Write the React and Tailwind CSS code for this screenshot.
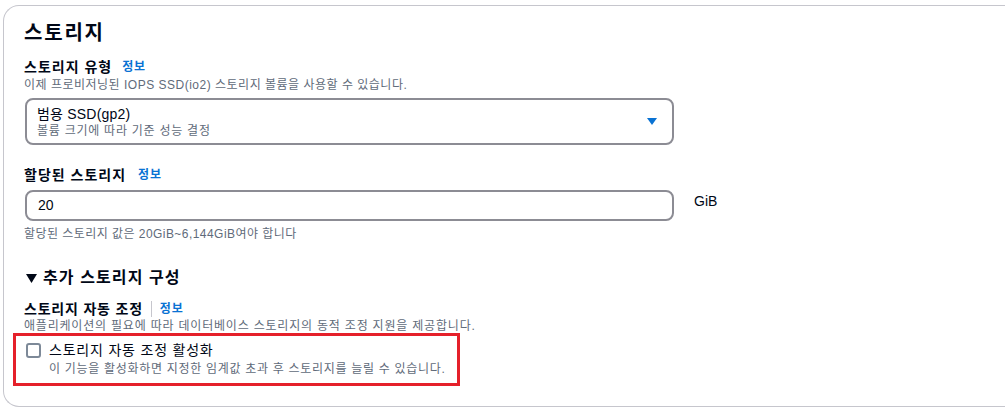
export default function App() {
  const font = { fontFamily: '"Liberation Sans", "Noto Sans CJK KR", sans-serif' };
  return (
    <div className="w-[1005px] h-[408px] bg-white overflow-hidden pt-[5px] pl-[3px]" style={font}>
      <div className="w-[1010px] h-[402px] border border-r-0 border-[#c6c6cd] rounded-l-[16px] bg-white pl-[20px] pt-[15px]">
        <h2 className="text-[20px] leading-[24px] font-bold text-[#000716] tracking-[1.8px]">스토리지</h2>

        <div className="mt-[13px]">
          <div className="flex items-center gap-[10px] h-[18px]">
            <span className="text-[14px] font-bold text-[#000716] tracking-[1px]">스토리지 유형</span>
            <span className="text-[12px] font-bold text-[#0972d3] tracking-[0.8px]">정보</span>
          </div>
          <div className="text-[12px] leading-[16px] text-[#5f6b7a] mt-[1px] tracking-[0.5px]">
            이제 프로비저닝된 IOPS SSD(io2) 스토리지 볼륨을 사용할 수 있습니다.
          </div>
          <div className="mt-[5px] ml-[1px] w-[649px] h-[47px] border-2 border-[#8c8c94] rounded-[8px] flex items-center justify-between pl-[10px] pr-[14px]">
            <div className="flex flex-col">
              <span className="text-[14px] leading-[18px] text-[#000716] tracking-[0.2px]">범용 SSD(gp2)</span>
              <span className="text-[12px] leading-[16px] text-[#5f6b7a] tracking-[0.75px]">볼륨 크기에 따라 기준 성능 결정</span>
            </div>
            <svg width="12" height="10" viewBox="0 0 12 10">
              <polygon points="1,1 11,1 6,8" fill="#0972d3" />
            </svg>
          </div>
        </div>

        <div className="mt-[21px]">
          <div className="flex items-center gap-[12px] h-[18px]">
            <span className="text-[14px] font-bold text-[#000716] tracking-[1px]">할당된 스토리지</span>
            <span className="text-[12px] font-bold text-[#0972d3] tracking-[0.8px]">정보</span>
          </div>
          <div className="flex items-start mt-[6px]">
            <div className="ml-[1px] w-[649px] h-[31px] border-2 border-[#8c8c94] rounded-[8px] flex items-center pl-[11px]">
              <span className="text-[14px] text-[#000716]">20</span>
            </div>
            <span className="ml-[20px] mt-[1px] text-[14px] text-[#000716]">GiB</span>
          </div>
          <div className="text-[12px] leading-[16px] text-[#5f6b7a] mt-[5px] tracking-[0.45px]">
            할당된 스토리지 값은 20GiB~6,144GiB여야 합니다
          </div>
        </div>

        <div className="mt-[25px] flex items-center gap-[6px] h-[22px] pl-[2px]">
          <svg width="11" height="9" viewBox="0 0 11 9">
            <polygon points="0,0 11,0 5.5,9" fill="#000716" />
          </svg>
          <span className="text-[16px] font-bold text-[#000716] tracking-[1.1px]">추가 스토리지 구성</span>
        </div>

        <div className="mt-[11px]">
          <div className="flex items-center h-[18px]">
            <span className="text-[14px] font-bold text-[#000716] tracking-[0.8px]">스토리지 자동 조정</span>
            <span className="mx-[8px] w-px h-[16px] bg-[#c6c6cd]"></span>
            <span className="text-[12px] font-bold text-[#0972d3] tracking-[0.8px]">정보</span>
          </div>
          <div className="text-[12px] leading-[14px] text-[#5f6b7a] mt-[1px] tracking-[0.8px]">
            애플리케이션의 필요에 따라 데이터베이스 스토리지의 동적 조정 지원을 제공합니다.
          </div>
          <div className="ml-[-11px] w-[447px] h-[53px] border-[3px] border-[#e5202a] pl-[10px] pt-[4px]">
            <div className="flex items-start">
              <div className="mt-[3px] w-[15px] h-[15px] border-2 border-[#7d8998] rounded-[3px] shrink-0"></div>
              <div className="ml-[8px] flex flex-col">
                <span className="text-[14px] leading-[20px] text-[#000716] tracking-[0.8px]">스토리지 자동 조정 활성화</span>
                <span className="text-[12px] leading-[16px] text-[#5f6b7a] mt-[1px] tracking-[0.7px]">이 기능을 활성화하면 지정한 임계값 초과 후 스토리지를 늘릴 수 있습니다.</span>
              </div>
            </div>
          </div>
        </div>
      </div>
    </div>
  );
}
